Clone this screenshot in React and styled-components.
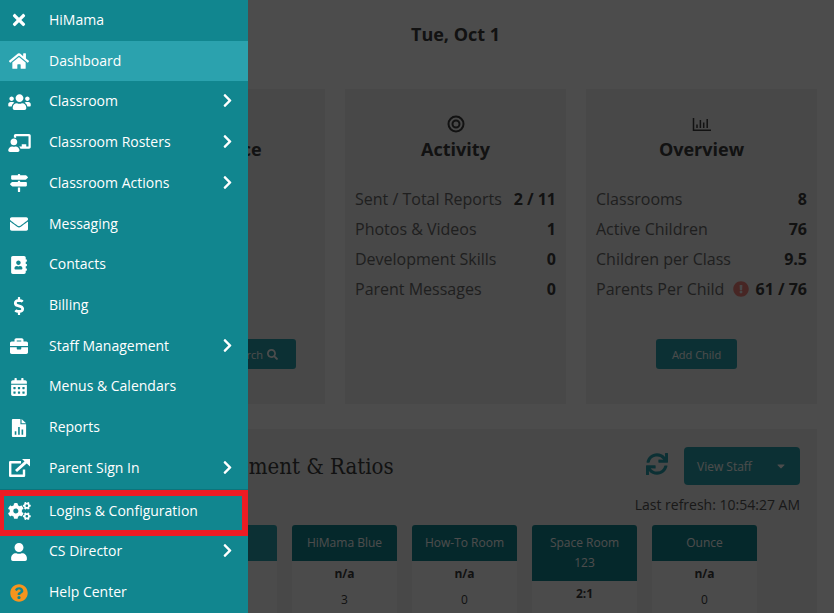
import React from "react";
import styled, { createGlobalStyle } from "styled-components";
import {
  FaTimes,
  FaHome,
  FaUsers,
  FaChalkboardTeacher,
  FaMapSigns,
  FaEnvelope,
  FaAddressBook,
  FaDollarSign,
  FaBriefcase,
  FaCalendarAlt,
  FaCogs,
  FaUser,
  FaQuestionCircle,
  FaChevronRight,
  FaSearch,
  FaSync,
  FaExclamationCircle,
  FaCaretDown,
} from "react-icons/fa";

const GlobalStyle = createGlobalStyle`
  * {
    box-sizing: border-box;
  }
  body {
    margin: 0;
    background-color: #fff;
    color: #3c3c3c;
    font-family: "Open Sans", "Noto Sans", sans-serif;
    font-size: 14px;
  }
  button {
    font-family: inherit;
    cursor: pointer;
  }
  h1, h2, p, ul, dl, dd {
    margin: 0;
    padding: 0;
  }
`;

const Sidebar = styled.nav`
  position: fixed;
  top: 0;
  bottom: 0;
  left: 0;
  z-index: 3;
  width: 248px;
  background-color: #11868f;
  ul {
    display: flex;
    flex-direction: column;
    height: 100%;
    list-style: none;
  }
`;

const MenuItem = styled.li`
  position: relative;
  flex: 1 0 0;
  display: flex;
  box-sizing: content-box;
  background-color: ${(props) => (props.$active ? "#2ba2ae" : "transparent")};
  border-top: ${(props) => (props.$divided ? "2px solid #0d747c" : "none")};
  &::after {
    content: ${(props) => (props.$marked ? '""' : "none")};
    position: absolute;
    inset: -1px 0 -4px 0;
    border: solid #ed1c24;
    border-width: 6px 6px 6px 4px;
    pointer-events: none;
  }
`;

const MenuLink = styled.a`
  flex: 1;
  display: flex;
  align-items: center;
  padding: 0 13px 2px 0;
  color: #fff;
  text-decoration: none;
  .icon {
    display: flex;
    justify-content: center;
    width: 38px;
    margin-right: 11px;
    padding-top: 2px;
    color: ${(props) => props.$iconColor || "#fff"};
    svg {
      width: ${(props) => (props.$wide ? "23px" : "20px")};
      height: 18px;
    }
  }
  .label {
    flex: 1;
  }
  .arrow {
    font-size: 15px;
  }
`;

const Backdrop = styled.div`
  position: fixed;
  inset: 0;
  z-index: 2;
  background-color: rgba(0, 0, 0, 0.7);
`;

const Page = styled.main`
  display: flex;
  flex-direction: column;
  min-height: 100vh;
  padding: 0 17px 0 94px;
`;

const DateTitle = styled.h1`
  padding: 22px 0 42px;
  font-size: 18px;
  line-height: 25px;
  font-weight: 700;
  text-align: center;
`;

const Cards = styled.div`
  display: grid;
  grid-template-columns: 231fr 221fr 231fr;
  gap: 20px;
`;

const Card = styled.section`
  display: flex;
  flex-direction: column;
  align-items: center;
  min-height: 315px;
  padding: 26px 10px 35px;
  background-color: #f0f0f0;
  .card-icon {
    height: 18px;
    svg {
      display: block;
    }
  }
  h2 {
    margin: 4px 0 22px;
    font-size: 18px;
    line-height: 25px;
    font-weight: 700;
  }
`;

const Stats = styled.dl`
  align-self: stretch;
`;

const StatRow = styled.div`
  display: flex;
  justify-content: space-between;
  align-items: center;
  font-size: 16px;
  line-height: 30px;
  white-space: nowrap;
  dt {
    color: #6a6a6a;
  }
  dd {
    display: flex;
    align-items: center;
    gap: 6px;
    font-weight: 700;
  }
  svg {
    color: #ee8078;
  }
`;

const Button = styled.button`
  display: inline-flex;
  align-items: center;
  gap: 4px;
  height: 30px;
  margin-top: auto;
  padding: 0 16px;
  border: none;
  border-radius: 3px;
  background-color: #2ba2ae;
  color: #fff;
  font-size: 11px;
`;

const SearchButton = styled(Button)`
  align-self: flex-end;
  margin-right: 19px;
  padding: 0 18px;
`;

const AddButton = styled(Button)`
  margin-right: 10px;
`;

const Panel = styled.section`
  flex: 1;
  display: flex;
  flex-direction: column;
  margin-top: 25px;
  padding-top: 18px;
  background-color: #f0f0f0;
`;

const PanelHead = styled.div`
  display: flex;
  justify-content: space-between;
  align-items: center;
  padding: 0 17px 0 10px;
  h2 {
    font-family: "DejaVu Serif Condensed", "DejaVu Serif", serif;
    font-size: 22px;
    font-weight: 400;
    white-space: nowrap;
  }
`;

const Tools = styled.div`
  display: flex;
  align-items: center;
  gap: 16px;
`;

const RefreshButton = styled.button`
  display: flex;
  padding: 0 0 4px;
  border: none;
  background: none;
  color: #2ba2ae;
  font-size: 22px;
`;

const ViewButton = styled.button`
  display: flex;
  justify-content: space-between;
  align-items: center;
  width: 116px;
  height: 38px;
  padding: 0 13px;
  border: none;
  border-radius: 4px;
  background-color: #2ba2ae;
  color: #fff;
  font-size: 12px;
`;

const LastRefresh = styled.p`
  padding: 10px 17px 10px 0;
  line-height: 20px;
  color: #555;
  text-align: right;
`;

const Rooms = styled.div`
  flex: 1;
  display: grid;
  grid-template-columns: repeat(5, 1fr);
  gap: 15px;
  padding: 0 60px 0 78px;
`;

const Room = styled.article`
  border-radius: 3px 3px 0 0;
  background-color: #fcfcfc;
  font-size: 12px;
  line-height: 26px;
  text-align: center;
  header {
    padding: 8px 12px;
    border-radius: 3px 3px 0 0;
    background-color: ${(props) => (props.$current ? "#2ba2ae" : "#11868f")};
    color: #fff;
    line-height: 20px;
  }
  strong {
    display: block;
    font-weight: 700;
  }
`;

const ReportIcon = () => (
  <svg viewBox="0 0 15 19" fill="currentColor" aria-hidden="true">
    <path
      fillRule="evenodd"
      d="M1 0H9V5.5H15V18A1 1 0 0 1 14 19H1A1 1 0 0 1 0 18V1A1 1 0 0 1 1 0ZM3 13V16.5H4.7V13ZM6.6 8.5V16.5H8.3V8.5ZM10.2 11V16.5H11.9V11Z"
    />
    <path d="M10.2 0L15 4.5H10.2Z" />
  </svg>
);

const ExternalIcon = () => (
  <svg viewBox="0 0 21 18" fill="none" aria-hidden="true">
    <path
      stroke="currentColor"
      strokeWidth="2.4"
      strokeLinejoin="round"
      d="M12 3.3H1.2V16.7H15V10.5"
    />
    <path stroke="currentColor" strokeWidth="3" d="M7 12L17.5 2.7" />
    <path fill="currentColor" d="M13 0H21V7.6Z" />
  </svg>
);

const TargetIcon = () => (
  <svg width="18" height="18" viewBox="0 0 18 18" fill="none" stroke="currentColor" strokeWidth="2" aria-hidden="true">
    <circle cx="9" cy="9" r="7.5" />
    <circle cx="9" cy="9" r="3.5" />
  </svg>
);

const ChartIcon = () => (
  <svg width="19" height="18" viewBox="0 0 19 18" fill="none" stroke="currentColor" strokeWidth="1.5" aria-hidden="true">
    <path d="M1.5 3V15.2H19" />
    <path d="M5 13V9.5M8.4 13V5M11.7 13V7.5M15.2 13V4" />
  </svg>
);

const menu = [
  { label: "HiMama", icon: <FaTimes /> },
  { label: "Dashboard", icon: <FaHome />, active: true },
  { label: "Classroom", icon: <FaUsers />, wide: true, arrow: true },
  { label: "Classroom Rosters", icon: <FaChalkboardTeacher />, wide: true, arrow: true },
  { label: "Classroom Actions", icon: <FaMapSigns />, arrow: true },
  { label: "Messaging", icon: <FaEnvelope /> },
  { label: "Contacts", icon: <FaAddressBook /> },
  { label: "Billing", icon: <FaDollarSign /> },
  { label: "Staff Management", icon: <FaBriefcase />, arrow: true },
  { label: "Menus & Calendars", icon: <FaCalendarAlt /> },
  { label: "Reports", icon: <ReportIcon /> },
  { label: "Parent Sign In", icon: <ExternalIcon />, wide: true, arrow: true },
  { label: "Logins & Configuration", icon: <FaCogs />, wide: true, divided: true, marked: true },
  { label: "CS Director", icon: <FaUser />, arrow: true },
  { label: "Help Center", icon: <FaQuestionCircle />, iconColor: "#f7941d" },
];

const activity = [
  { label: "Sent / Total Reports", value: "2 / 11" },
  { label: "Photos & Videos", value: "1" },
  { label: "Development Skills", value: "0" },
  { label: "Parent Messages", value: "0" },
];

const overview = [
  { label: "Classrooms", value: "8" },
  { label: "Active Children", value: "76" },
  { label: "Children per Class", value: "9.5" },
  { label: "Parents Per Child", value: "61 / 76", warning: true },
];

const rooms = [
  { current: true },
  { name: "HiMama Blue", ratio: "n/a", count: 3 },
  { name: "How-To Room", ratio: "n/a", count: 0 },
  { name: "Space Room 123", ratio: "2:1" },
  { name: "Ounce", ratio: "n/a", count: 0 },
];

const StatList = ({ items }) => (
  <Stats>
    {items.map((item) => (
      <StatRow key={item.label}>
        <dt>{item.label}</dt>
        <dd>
          {item.warning && <FaExclamationCircle />}
          {item.value}
        </dd>
      </StatRow>
    ))}
  </Stats>
);

const App = () => {
  return (
    <>
      <GlobalStyle />
      <Sidebar>
        <ul>
          {menu.map((item) => (
            <MenuItem
              key={item.label}
              $active={item.active}
              $divided={item.divided}
              $marked={item.marked}
            >
              <MenuLink href="#" $iconColor={item.iconColor} $wide={item.wide}>
                <span className="icon">{item.icon}</span>
                <span className="label">{item.label}</span>
                {item.arrow && <FaChevronRight className="arrow" />}
              </MenuLink>
            </MenuItem>
          ))}
        </ul>
      </Sidebar>
      <Backdrop />
      <Page>
        <DateTitle>Tue, Oct 1</DateTitle>
        <Cards>
          <Card>
            <div className="card-icon" />
            <h2>Attendance</h2>
            <SearchButton>
              Search <FaSearch />
            </SearchButton>
          </Card>
          <Card>
            <div className="card-icon">
              <TargetIcon />
            </div>
            <h2>Activity</h2>
            <StatList items={activity} />
          </Card>
          <Card>
            <div className="card-icon">
              <ChartIcon />
            </div>
            <h2>Overview</h2>
            <StatList items={overview} />
            <AddButton>Add Child</AddButton>
          </Card>
        </Cards>
        <Panel>
          <PanelHead>
            <h2>Room Management &amp; Ratios</h2>
            <Tools>
              <RefreshButton aria-label="Refresh">
                <FaSync />
              </RefreshButton>
              <ViewButton>
                View Staff <FaCaretDown />
              </ViewButton>
            </Tools>
          </PanelHead>
          <LastRefresh>Last refresh: 10:54:27 AM</LastRefresh>
          <Rooms>
            {rooms.map((room, index) => (
              <Room key={index} $current={room.current}>
                <header>{room.name || "\u00a0"}</header>
                <strong>{room.ratio}</strong>
                {room.count}
              </Room>
            ))}
          </Rooms>
        </Panel>
      </Page>
    </>
  );
};

export default App;
